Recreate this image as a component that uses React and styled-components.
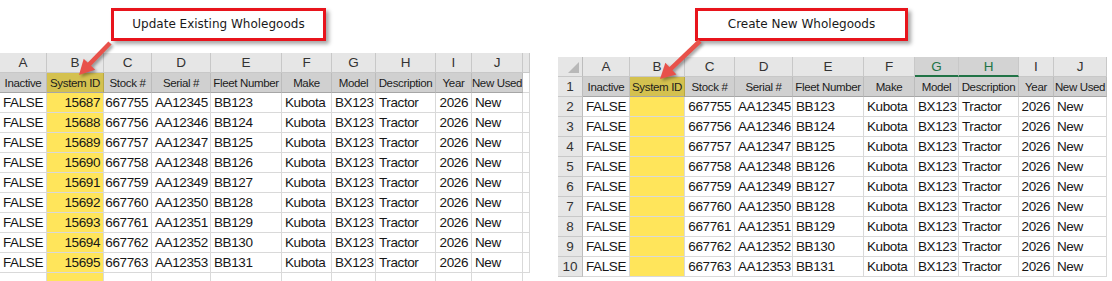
import React from "react";
import styled, { createGlobalStyle } from "styled-components";

const GlobalStyle = createGlobalStyle`
  html, body {
    margin: 0;
    padding: 0;
    background: #ffffff;
  }
  body {
    width: 1112px;
    height: 281px;
    overflow: hidden;
    font-family: "Liberation Sans", Arial, sans-serif;
  }
`;

const Page = styled.div`
  display: flex;
  align-items: flex-start;
  width: 1112px;
  height: 281px;
  overflow: hidden;
`;

const Panel = styled.div`
  position: relative;
  display: flex;
  flex-direction: column;
  margin-left: ${({ offset }) => offset}px;
  padding-top: 8px;
`;

const CalloutRow = styled.div`
  display: flex;
  padding-left: ${({ indent }) => indent}px;
`;

const Callout = styled.div`
  box-sizing: border-box;
  width: ${({ w }) => w}px;
  height: 33px;
  border: 3px solid #e8141c;
  background: #ffffff;
  box-shadow: 3px 3px 4px rgba(0, 0, 0, 0.35);
  display: flex;
  align-items: center;
  justify-content: center;
  font-family: "DejaVu Sans", "Liberation Sans", sans-serif;
  font-size: 12px;
  color: #1a1a1a;
  padding-bottom: 2px;
`;

const Sheet = styled.div`
  display: grid;
  grid-template-columns: ${({ cols }) => cols.map((c) => c + "px").join(" ")};
  grid-auto-rows: 20px;
  margin-top: ${({ gap }) => gap}px;
`;

const Cell = styled.div`
  box-sizing: border-box;
  display: flex;
  align-items: center;
  justify-content: ${({ align }) =>
    align === "right" ? "flex-end" : align === "center" ? "center" : "flex-start"};
  padding: 0 3px;
  white-space: nowrap;
  overflow: hidden;
  border-right: 1px solid #d9d9d9;
  border-bottom: 1px solid #d9d9d9;
  font-size: 13.5px;
  letter-spacing: -0.4px;
  color: #161616;
  background: ${({ yellow }) => (yellow ? "#ffe55b" : "#ffffff")};
`;

const LetterCell = styled(Cell)`
  justify-content: center;
  background: ${({ selected }) => (selected ? "#d3d3d3" : "#e6e6e6")};
  color: ${({ selected }) => (selected ? "#217346" : "#333333")};
  border-right: 1px solid #c8c8c8;
  border-bottom: ${({ selected }) => (selected ? "2px solid #217346" : "1px solid #c8c8c8")};
  font-size: 13.5px;
  letter-spacing: 0;
`;

const HeadCell = styled(Cell)`
  justify-content: center;
  background: ${({ yellow }) => (yellow ? "#d4c14f" : "#d0d0d0")};
  border-right: 1px solid ${({ yellow }) => (yellow ? "#b9a843" : "#bcbcbc")};
  border-bottom: 1px solid #a6a6a6;
  font-size: 11.5px;
  letter-spacing: -0.35px;
  color: #1c1c1c;
  padding: 0;
`;

const RowNum = styled(Cell)`
  justify-content: center;
  background: #e6e6e6;
  border-right: 1px solid #bdbdbd;
  border-bottom: 1px solid #c8c8c8;
  color: #333333;
  letter-spacing: 0;
`;

const Corner = styled(RowNum)`
  position: relative;
  &::after {
    content: "";
    position: absolute;
    right: 3px;
    bottom: 3px;
    border-left: 11px solid transparent;
    border-bottom: 11px solid #b8b8b8;
  }
`;

const ArrowLayer = styled.svg`
  position: absolute;
  left: 0;
  top: 0;
  overflow: visible;
  pointer-events: none;
  filter: drop-shadow(2px 2px 1.5px rgba(0, 0, 0, 0.35));
`;

const Arrow = ({ x1, y1, x2, y2 }) => {
  const dx = x2 - x1;
  const dy = y2 - y1;
  const len = Math.hypot(dx, dy);
  const ux = dx / len;
  const uy = dy / len;
  const head = 15;
  const half = 8;
  const bx = x2 - ux * head;
  const by = y2 - uy * head;
  const pts = [
    [x2, y2],
    [bx - uy * half, by + ux * half],
    [bx + uy * half, by - ux * half],
  ]
    .map((p) => p.join(","))
    .join(" ");
  return (
    <ArrowLayer width="1" height="1">
      <line x1={x1} y1={y1} x2={bx + ux * 2} y2={by + uy * 2} stroke="#e8514a" strokeWidth="4.5" />
      <polygon points={pts} fill="#e8514a" />
    </ArrowLayer>
  );
};

const letters = ["A", "B", "C", "D", "E", "F", "G", "H", "I", "J"];
const headers = [
  "Inactive",
  "System ID",
  "Stock #",
  "Serial #",
  "Fleet Number",
  "Make",
  "Model",
  "Description",
  "Year",
  "New Used",
];
const aligns = ["center", "right", "right", "left", "left", "left", "left", "left", "right", "left"];

const rows = Array.from({ length: 9 }, (_, i) => ({
  id: String(15687 + i),
  stock: String(667755 + i),
  serial: "AA" + (12345 + i),
  fleet: "BB" + (123 + i),
}));

const rowValues = (r, withId) => [
  "FALSE",
  withId ? r.id : "",
  r.stock,
  r.serial,
  r.fleet,
  "Kubota",
  "BX123",
  "Tractor",
  "2026",
  "New",
];

const leftCols = [47, 57, 48, 59, 71, 50, 44, 60, 36, 51, 4];
const rightCols = [25, 47, 55, 50, 58, 71, 51, 44, 60, 35, 53];

const ExistingSheet = () => (
  <Sheet cols={leftCols} gap={12}>
    {letters.map((l) => (
      <LetterCell key={"l" + l}>{l}</LetterCell>
    ))}
    <LetterCell />
    {headers.map((h, i) => (
      <HeadCell key={"h" + h} yellow={i === 1}>
        {h}
      </HeadCell>
    ))}
    <Cell />
    {rows.map((r, ri) => (
      <React.Fragment key={ri}>
        {rowValues(r, true).map((v, ci) => (
          <Cell key={ci} align={aligns[ci]} yellow={ci === 1}>
            {v}
          </Cell>
        ))}
        <Cell />
      </React.Fragment>
    ))}
    {letters.map((l, ci) => (
      <Cell key={"e" + l} yellow={ci === 1} />
    ))}
  </Sheet>
);

const NewSheet = () => (
  <Sheet cols={rightCols} gap={16}>
    <Corner />
    {letters.map((l) => (
      <LetterCell key={"l" + l} selected={l === "G" || l === "H"}>
        {l}
      </LetterCell>
    ))}
    <RowNum>1</RowNum>
    {headers.map((h, i) => (
      <HeadCell key={"h" + h} yellow={i === 1}>
        {h}
      </HeadCell>
    ))}
    {rows.map((r, ri) => (
      <React.Fragment key={ri}>
        <RowNum>{ri + 2}</RowNum>
        {rowValues(r, false).map((v, ci) => (
          <Cell key={ci} align={aligns[ci]} yellow={ci === 1}>
            {v}
          </Cell>
        ))}
      </React.Fragment>
    ))}
  </Sheet>
);

export default function App() {
  return (
    <>
      <GlobalStyle />
      <Page>
        <Panel offset={0}>
          <CalloutRow indent={111}>
            <Callout w={215}>Update Existing Wholegoods</Callout>
          </CalloutRow>
          <ExistingSheet />
          <Arrow x1={110} y1={43} x2={79} y2={75} />
        </Panel>
        <Panel offset={31}>
          <CalloutRow indent={137}>
            <Callout w={213}>Create New Wholegoods</Callout>
          </CalloutRow>
          <NewSheet />
          <Arrow x1={142} y1={41} x2={102} y2={79} />
        </Panel>
      </Page>
    </>
  );
}
